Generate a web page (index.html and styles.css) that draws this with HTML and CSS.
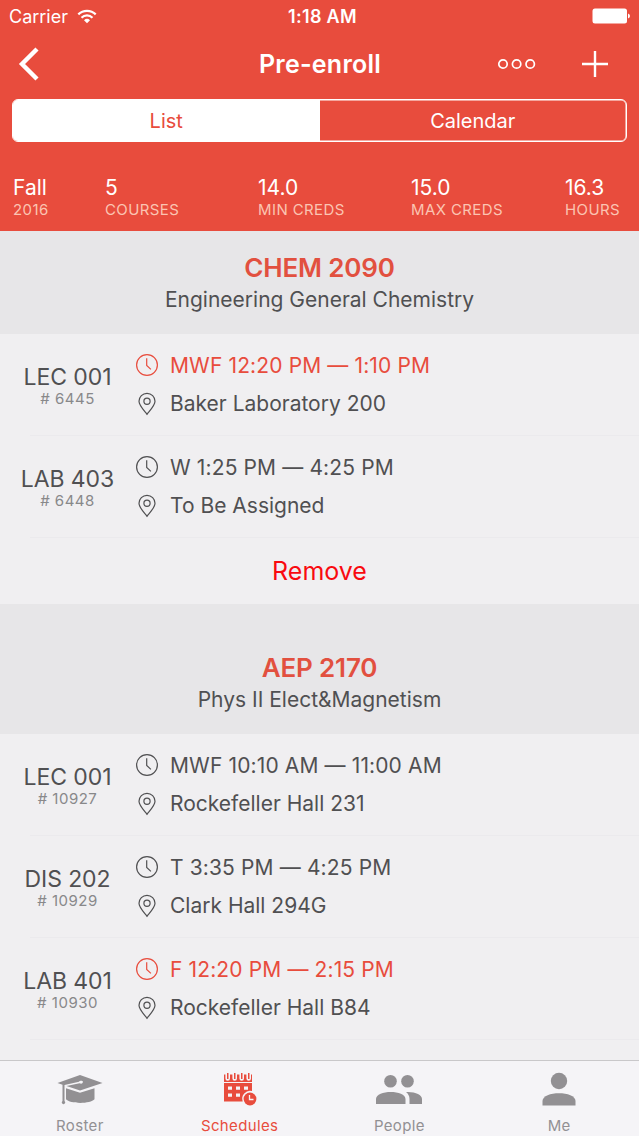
FILE: index.html
```html
<!DOCTYPE html>
<html lang="en">
<head>
    <meta charset="UTF-8">
    <meta name="viewport" content="width=device-width, initial-scale=1.0">
    <title>Pre-enroll</title>
    <link rel="stylesheet" href="styles.css">
</head>
<body>
    <!-- icons used more than once -->
    <svg class="sprite" width="0" height="0">
        <symbol id="clock" viewBox="0 0 24 24">
            <circle cx="12" cy="12" r="10.4"/>
            <path d="M11.7 5.2v7.3l4.2 3.9"/>
        </symbol>
        <symbol id="pin" viewBox="0 0 24 24">
            <path d="M12 22.3C9.6 19 4 13.6 4 9.3a8 8 0 0 1 16 0c0 4.3-5.6 9.7-8 13z"/>
            <circle cx="12" cy="9.2" r="3.1"/>
        </symbol>
    </svg>

    <div class="app">
        <header class="header">
            <div class="status">
                <div class="carrier">
                    <span>Carrier</span>
                    <svg width="20" height="15" viewBox="0 0 20 15" fill="none" stroke="#fff" stroke-width="2.2">
                        <path d="M1.3 5.4a12.3 12.3 0 0 1 17.4 0"/>
                        <path d="M4.5 8.7a7.8 7.8 0 0 1 11 0"/>
                        <path d="M10 14.3L7 11.2a4.3 4.3 0 0 1 6 0z" fill="#fff" stroke="none"/>
                    </svg>
                </div>
                <span class="clock-time">1:18 AM</span>
                <svg class="battery" width="38" height="16" viewBox="0 0 38 16" fill="#fff">
                    <rect x="0.5" y="0.5" width="34.5" height="15" rx="2.5"/>
                    <path d="M36 5.5q2 .8 2 2.5t-2 2.5z"/>
                </svg>
            </div>

            <nav class="navbar">
                <svg width="22" height="34" viewBox="0 0 22 34" fill="none" stroke="#fff" stroke-width="4.4">
                    <path d="M19 2L4 17l15 15"/>
                </svg>
                <h1>Pre-enroll</h1>
                <div class="actions">
                    <svg width="40" height="12" viewBox="0 0 40 12" fill="none" stroke="#fff" stroke-width="1.7">
                        <circle cx="6" cy="6" r="4.2"/>
                        <circle cx="19.6" cy="6" r="4.2"/>
                        <circle cx="33.2" cy="6" r="4.2"/>
                    </svg>
                    <svg width="26" height="26" viewBox="0 0 26 26" stroke="#fff" stroke-width="2.4">
                        <path d="M13 0v26M0 13h26"/>
                    </svg>
                </div>
            </nav>

            <div class="segmented">
                <div class="segment active">List</div>
                <div class="segment">Calendar</div>
            </div>

            <div class="stats">
                <div class="stat"><strong>Fall</strong><span>2016</span></div>
                <div class="stat"><strong>5</strong><span>COURSES</span></div>
                <div class="stat"><strong>14.0</strong><span>MIN CREDS</span></div>
                <div class="stat"><strong>15.0</strong><span>MAX CREDS</span></div>
                <div class="stat"><strong>16.3</strong><span>HOURS</span></div>
            </div>
        </header>

        <main class="courses">
            <section>
                <div class="course-title">
                    <h2>CHEM 2090</h2>
                    <p>Engineering General Chemistry</p>
                </div>
                <div class="row">
                    <div class="section-id"><b>LEC 001</b><small># 6445</small></div>
                    <div class="details">
                        <div class="line time conflict"><svg><use href="#clock"/></svg><span>MWF 12:20 PM — 1:10 PM</span></div>
                        <div class="line"><svg><use href="#pin"/></svg><span>Baker Laboratory 200</span></div>
                    </div>
                </div>
                <div class="row">
                    <div class="section-id"><b>LAB 403</b><small># 6448</small></div>
                    <div class="details">
                        <div class="line time"><svg><use href="#clock"/></svg><span>W 1:25 PM — 4:25 PM</span></div>
                        <div class="line"><svg><use href="#pin"/></svg><span>To Be Assigned</span></div>
                    </div>
                </div>
                <div class="remove">Remove</div>
            </section>

            <section>
                <div class="course-title spaced">
                    <h2>AEP 2170</h2>
                    <p>Phys II Elect&amp;Magnetism</p>
                </div>
                <div class="row">
                    <div class="section-id"><b>LEC 001</b><small># 10927</small></div>
                    <div class="details">
                        <div class="line time"><svg><use href="#clock"/></svg><span>MWF 10:10 AM — 11:00 AM</span></div>
                        <div class="line"><svg><use href="#pin"/></svg><span>Rockefeller Hall 231</span></div>
                    </div>
                </div>
                <div class="row">
                    <div class="section-id"><b>DIS 202</b><small># 10929</small></div>
                    <div class="details">
                        <div class="line time"><svg><use href="#clock"/></svg><span>T 3:35 PM — 4:25 PM</span></div>
                        <div class="line"><svg><use href="#pin"/></svg><span>Clark Hall 294G</span></div>
                    </div>
                </div>
                <div class="row">
                    <div class="section-id"><b>LAB 401</b><small># 10930</small></div>
                    <div class="details">
                        <div class="line time conflict"><svg><use href="#clock"/></svg><span>F 12:20 PM — 2:15 PM</span></div>
                        <div class="line"><svg><use href="#pin"/></svg><span>Rockefeller Hall B84</span></div>
                    </div>
                </div>
            </section>
        </main>

        <footer class="tabbar">
            <div class="tab">
                <svg width="46" height="34" viewBox="0 0 46 34" fill="currentColor">
                    <path d="M23 3L.5 11l5 1.7v16.3a1.7 1.7 0 1 0 2 0V13l14.5-3.3a2 1.4 0 1 1 .6 1.5L9.5 14l13.500 4.500 22.500-7.500z"/>
                    <path d="M9 16.3l14 4.500 14.500-4.500v11c-4 4.800-24.500 4.800-28.500 0z"/>
                </svg>
                <span>Roster</span>
            </div>
            <div class="tab active">
                <svg width="34" height="34" viewBox="0 0 34 34" fill="currentColor">
                    <path d="M1 2.5h1.4v4a2.3 2.3 0 0 0 4.6 0v-4h2.4v4a2.3 2.3 0 0 0 4.6 0v-4h2.4v4a2.3 2.3 0 0 0 4.6 0v-4h2.4v4a2.3 2.3 0 0 0 4.6 0v-4H29v7.5H1z"/>
                    <path fill-rule="evenodd" d="M1 11h28v8a8 8 0 0 0-9.3 10.5H1zM5 14.5h4v3.3H5zM13 14.5h4v3.3h-4zM21 14.5h4v3.3h-4zM5 21.5h4v3.3H5zM13 21.5h4v3.3h-4z"/>
                    <path d="M4 1h1.5v6H4zM11 1h1.5v6H11zM18 1h1.5v6H18zM25 1h1.5v6H25z"/>
                    <circle cx="27" cy="27" r="6.4"/>
                    <path d="M26.5 23v4.5h4" fill="none" stroke="#f5f4f7" stroke-width="1.3"/>
                </svg>
                <span>Schedules</span>
            </div>
            <div class="tab">
                <svg width="48" height="34" viewBox="0 0 48 34" fill="currentColor">
                    <circle cx="15.5" cy="9.3" r="6.3"/>
                    <circle cx="32.5" cy="9.3" r="6.3"/>
                    <path d="M1 32v-5c0-9.5 29.5-9.5 29.5 0v5z"/>
                    <path d="M31 20c9-.5 16 2.5 16 7v5H34.5v-5c0-3-1.5-5.5-3.5-7z"/>
                </svg>
                <span>People</span>
            </div>
            <div class="tab">
                <svg width="34" height="34" viewBox="0 0 34 34" fill="currentColor">
                    <circle cx="17" cy="9" r="8.2"/>
                    <path d="M.5 33.5V29c0-10.5 33-10.5 33 0v4.5z"/>
                </svg>
                <span>Me</span>
            </div>
        </footer>
    </div>
</body>
</html>
```

FILE: styles.css
```css
* {
    box-sizing: border-box;
}
body {
    margin: 0;
    font-family: Inter, "Liberation Sans", sans-serif;
    background-color: #f0eff1;
    color: #505052;
}
h1, h2, p {
    margin: 0;
}
svg {
    display: block;
}
.sprite {
    display: none;
}
.app {
    display: flex;
    flex-direction: column;
    height: 1136px;
    overflow: hidden;
}

/* header */
.header {
    height: 231px;
    flex: none;
    background-color: #e84c3d;
    color: #fff;
}
.status {
    display: grid;
    grid-template-columns: 1fr auto 1fr;
    align-items: center;
    height: 32px;
    padding: 0 9px;
    font-size: 18px;
}
.carrier {
    display: flex;
    gap: 9px;
    align-items: center;
}
.clock-time {
    font-weight: 600;
    padding-left: 6px;
    letter-spacing: 0.3px;
}
.battery {
    justify-self: end;
}
.navbar {
    display: grid;
    grid-template-columns: 1fr auto 1fr;
    align-items: center;
    height: 67px;
    padding: 0 31px 3px 18px;
}
.navbar h1 {
    font-size: 25px;
    font-weight: 600;
    letter-spacing: 0.25px;
    padding-left: 14px;
}
.actions {
    display: flex;
    align-items: center;
    justify-content: flex-end;
    gap: 45px;
    padding-bottom: 1px;
}
.segmented {
    display: flex;
    height: 43px;
    margin: 0 12px;
    border: 1px solid #fff;
    border-radius: 6px;
    box-shadow: inset 0 0 0 0.5px #fff;
}
.segment {
    flex: 1;
    display: flex;
    align-items: center;
    justify-content: center;
    font-size: 20px;
}
.segment.active {
    background-color: #fff;
    color: #e84c3d;
    border-radius: 5px 0 0 5px;
}
.stats {
    display: grid;
    grid-template-columns: 92px 153px 153px 154px 1fr;
    padding: 33px 0 0 13px;
}
.stat strong, .stat span {
    display: block;
    white-space: nowrap;
}
.stat strong {
    font-size: 21px;
    font-weight: 400;
    line-height: 26px;
}
.stat span {
    font-size: 15px;
    line-height: 17px;
    letter-spacing: 0.4px;
    color: #fbc4b2;
}

/* course list */
.courses {
    flex: 1;
    min-height: 0;
    overflow: hidden;
}
.course-title {
    height: 103px;
    padding-top: 20px;
    background-color: #e7e6e8;
    text-align: center;
}
.course-title.spaced {
    height: 130px;
    padding-top: 47px;
}
.course-title h2 {
    font-size: 26px;
    font-weight: 600;
    line-height: 34px;
    letter-spacing: -0.15px;
    color: #e2503f;
}
.course-title p {
    font-size: 21px;
    line-height: 30px;
}
.row {
    display: flex;
    height: 102px;
    background: linear-gradient(#ebeaed, #ebeaed) 30px 100% / 100% 1px no-repeat;
}
.section-id {
    width: 135px;
    padding-top: 30px;
    text-align: center;
}
.section-id b, .section-id small {
    display: block;
}
.section-id b {
    font-size: 23px;
    font-weight: 400;
    line-height: 27px;
    letter-spacing: -0.1px;
}
.section-id small {
    font-size: 15px;
    line-height: 15px;
    letter-spacing: 0.5px;
    color: #88888a;
}
.details {
    padding-top: 12px;
}
.line {
    display: flex;
    align-items: center;
    gap: 11px;
    height: 38.5px;
    font-size: 21px;
}
.line.time {
    letter-spacing: 0.13px;
}
.line svg {
    width: 24px;
    height: 24px;
    fill: none;
    stroke: currentColor;
    stroke-width: 1.2;
}
.conflict {
    color: #e84c3d;
}
.remove {
    height: 66px;
    line-height: 66px;
    text-align: center;
    font-size: 25px;
    color: #f90a0f;
}

/* tab bar */
.tabbar {
    flex: none;
    display: grid;
    grid-template-columns: repeat(4, 1fr);
    height: 76px;
    border-top: 1px solid #c9c8ca;
    background-color: #f5f4f7;
}
.tab {
    display: flex;
    flex-direction: column;
    align-items: center;
    padding-top: 11px;
    color: #929093;
    font-size: 15px;
    letter-spacing: 0.35px;
}
.tab span {
    margin-top: 10px;
    line-height: 20px;
}
.tab.active {
    color: #e84c3d;
}
```
